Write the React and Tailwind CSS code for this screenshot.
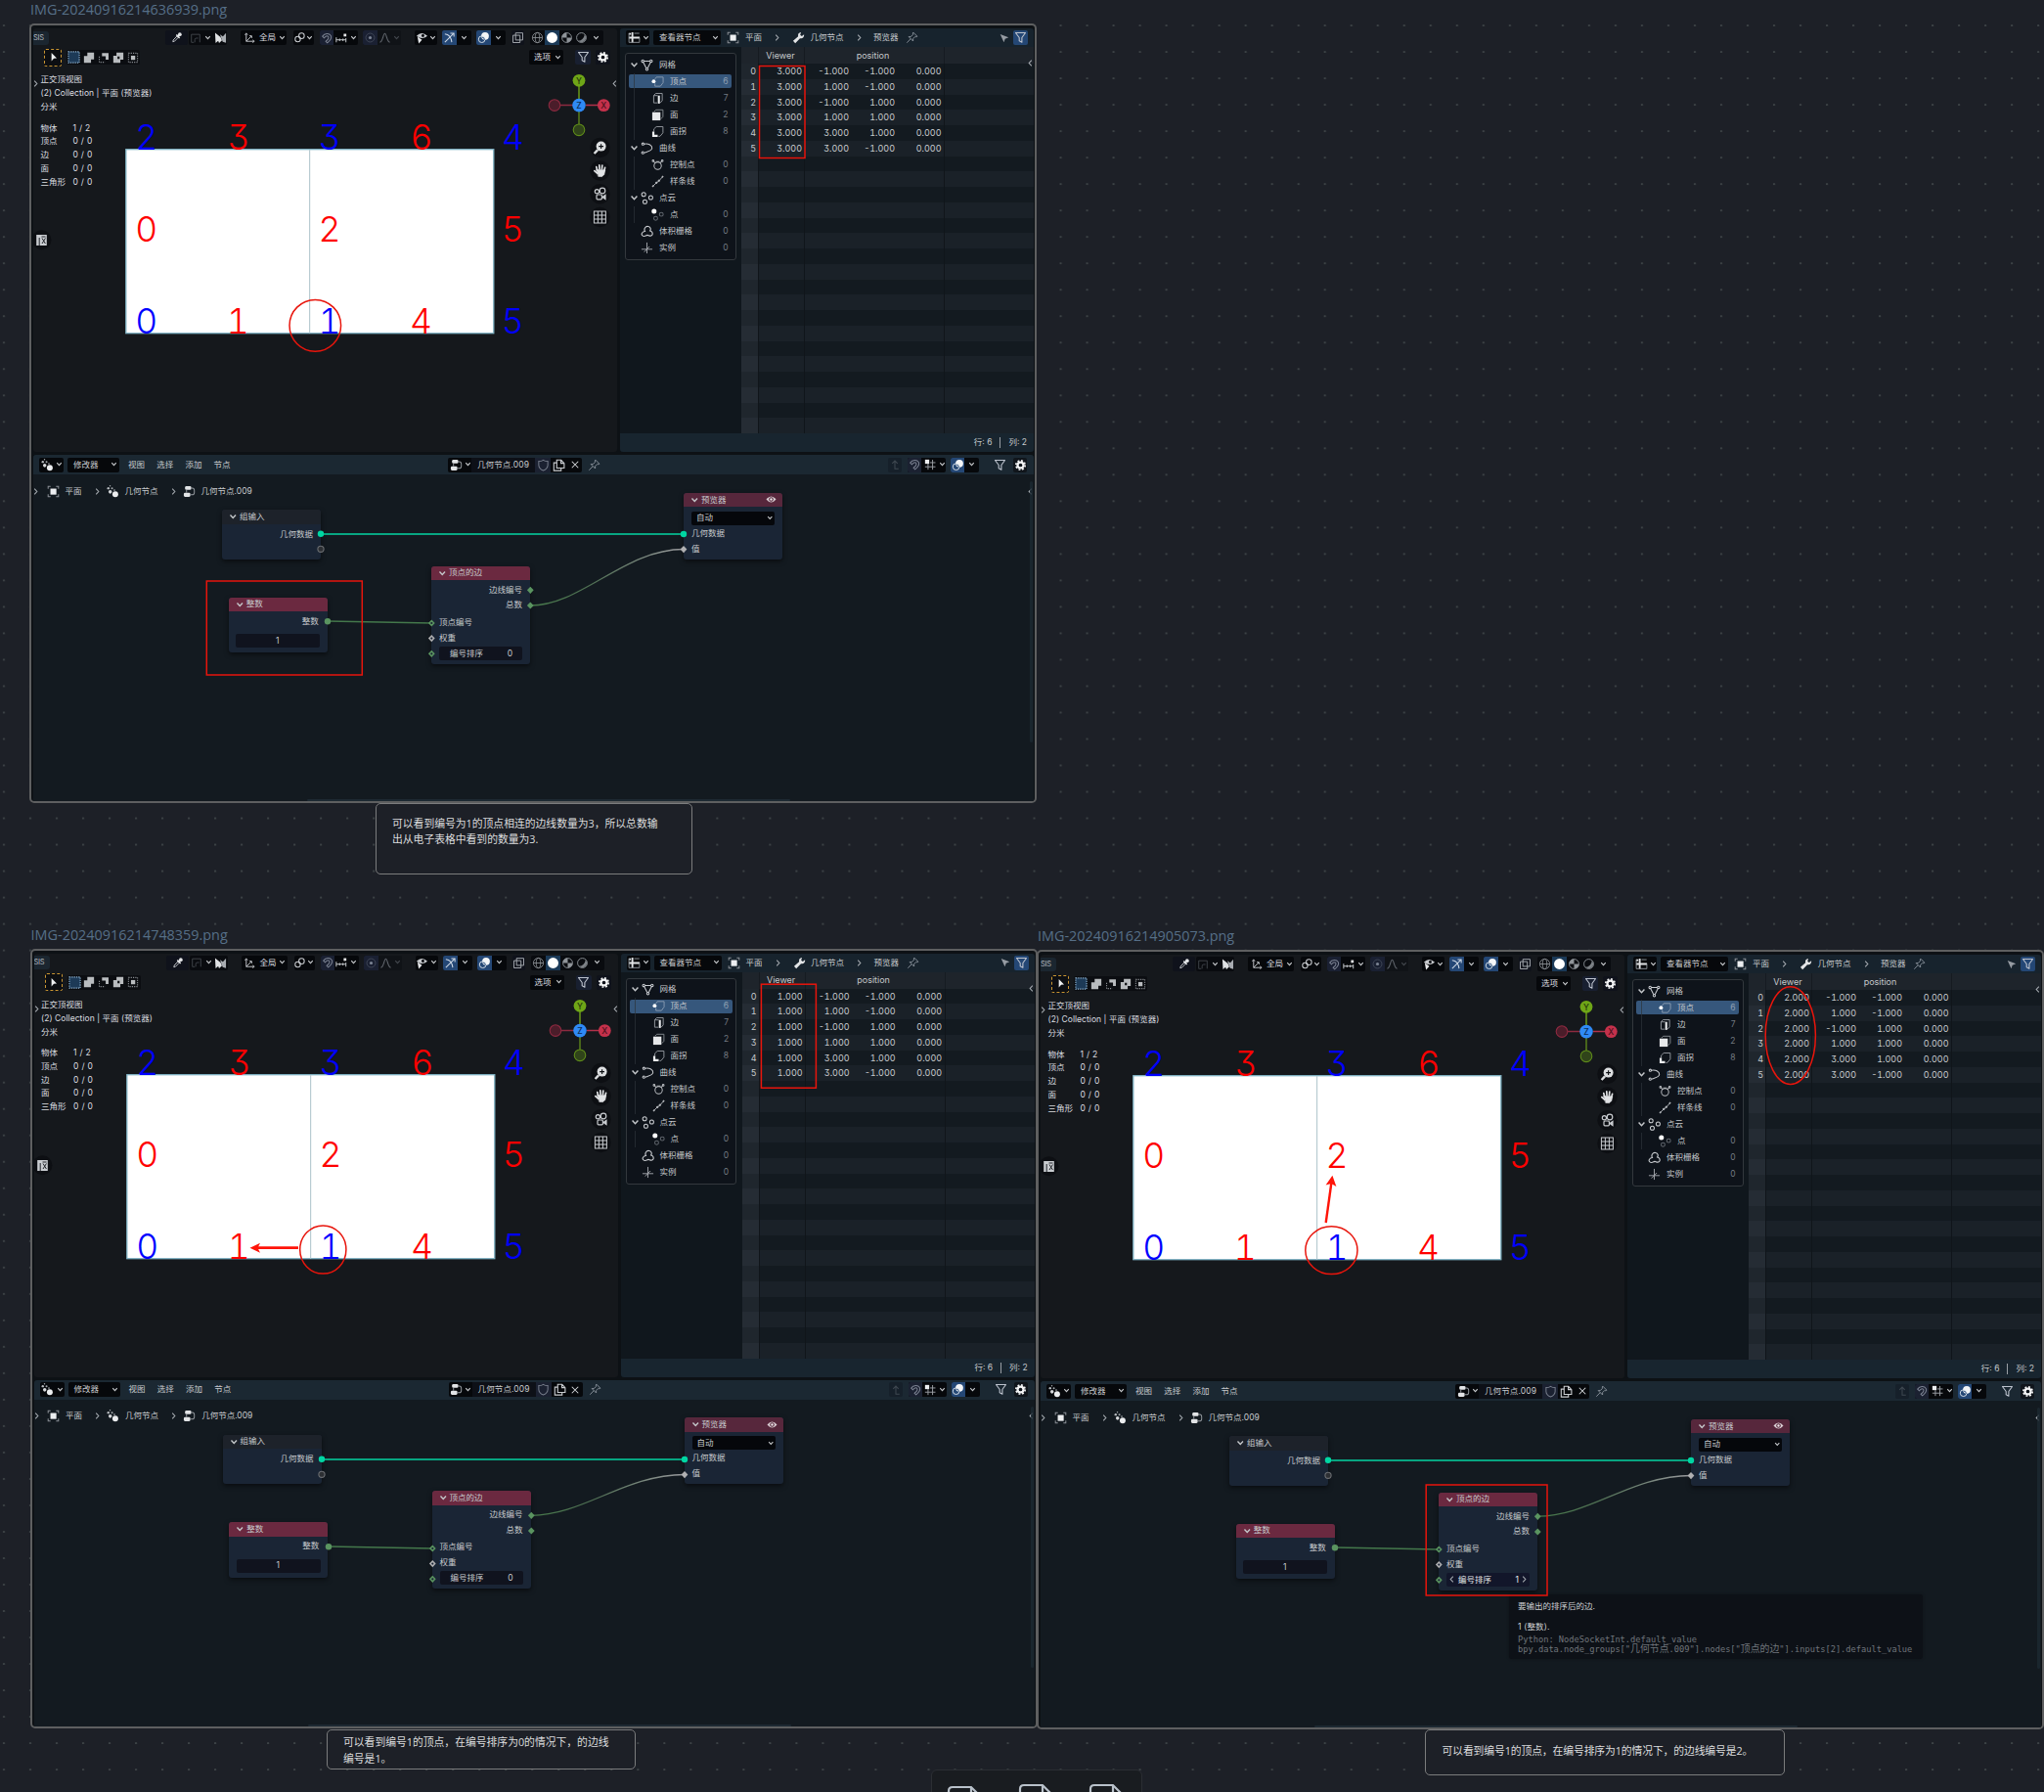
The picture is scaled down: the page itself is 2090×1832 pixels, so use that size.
import React from "react";
import clsx from "clsx";

const CJK = "font-['Inter','Noto_Sans_CJK_SC',sans-serif]";

/* ---------- icons, all drawn on a 14 x 14 grid ---------- */
const G = "#c9ccd0";
const ICONS = {
  eyedropper: (
    <g>
      <path d="M3 11.5 L3.4 9.6 L7.6 5.2 L9 6.6 L4.8 11 Z" fill="none" stroke={G} strokeWidth="1" />
      <path d="M6.8 3.8 L10.4 7.4 M8.2 5.6 L10.6 3.2" stroke="#e4e6e8" strokeWidth="1.7" />
      <circle cx="10.6" cy="3.4" r="2" fill="#e4e6e8" />
    </g>
  ),
  falloff: <path d="M2 2.5 H12 V12 M2 2.5 V12 H5 M6 12 V9 Q6 7 8 7 H10" fill="none" stroke="#4d5258" strokeWidth="0.9" />,
  mirror: (
    <g>
      <path d="M1 1.5 L7 6.5 L8.6 10 L5.4 13 L4.4 10.6 L1.6 13 Z" fill="#e0e2e4" />
      <path d="M13 2 L9.6 5.6 L6.4 3.4 L8 8 L9.4 11.6 L13 12.6 Z" fill="#a9adb2" />
    </g>
  ),
  axes: (
    <g fill="none" stroke={G} strokeWidth="1">
      <path d="M3 3 V11 H11 M3 11 L8.5 5.5" />
      <path d="M1.6 4 L3 2 L4.4 4 M10 9.6 L12 11 L10 12.4 M6.5 5 L9 5 L9 7.5" />
    </g>
  ),
  link: (
    <g fill="none" stroke={G} strokeWidth="1.1">
      <circle cx="4.8" cy="8.6" r="2.9" />
      <circle cx="9" cy="5" r="3" />
      <circle cx="7" cy="7" r="0.9" fill={G} stroke="none" />
    </g>
  ),
  magnet: (
    <path
      d="M2 4.8 C4.6 1 10 0.8 12 4 C13.4 7.4 10.8 10.4 7.8 12.6 L6 10.8 C8.6 8.8 10 6.8 9 5.2 C7.8 3.6 5.6 4.8 4 6.8 Z"
      fill="none"
      stroke="#7b8292"
      strokeWidth="1.2"
    />
  ),
  increments: (
    <g stroke={G} strokeWidth="1.1" fill="none">
      <path d="M1 6 V12 M5 7.5 V10.5 M9 7.5 V10.5 M12.5 7 V12 M1 9 H12.5" />
      <rect x="9.8" y="1.8" width="3.2" height="3.2" fill="#e4e6e8" stroke="none" />
    </g>
  ),
  proportional: (
    <g>
      <circle cx="7" cy="7" r="4.8" fill="none" stroke="#454c5c" strokeWidth="0.9" />
      <circle cx="7" cy="7" r="1.7" fill="#7c8494" />
    </g>
  ),
  bell: <path d="M1.5 12 C5 11.5 5 2.5 7 2.5 C9 2.5 9 11.5 12.5 12" fill="none" stroke="#5f646b" strokeWidth="1.1" />,
  eyecursor: (
    <g>
      <path d="M1 5 Q6.5 -0.6 13 5 Q7 10 1 5 Z" fill={G} />
      <circle cx="8" cy="4.8" r="1.6" fill="#0a0c10" />
      <path d="M2 6 L7 9.5 L3.4 13.4 Z" fill="#e8eaec" />
    </g>
  ),
  gizmo: (
    <g fill="none" stroke="#cfd9e6" strokeWidth="1.1">
      <path d="M2 3 C6 3.5 9 7 9.6 12 M2 12 L11.5 2.5 M8 2.2 H12 V6" />
    </g>
  ),
  overlay: (
    <g>
      <circle cx="8.6" cy="5.2" r="4.2" fill="#f3f5f7" />
      <circle cx="5" cy="8.8" r="3.6" fill="none" stroke="#dfe6ee" strokeWidth="1" />
      <path d="M5 6.5 Q8 6.5 8 9.5" fill="none" stroke="#264a78" strokeWidth="1" />
    </g>
  ),
  xray: (
    <g fill="none" stroke="#a9adb2" strokeWidth="1">
      <path d="M4.5 1.8 H12.4 V9.6 H4.5 Z" />
      <path d="M1.6 4.4 H9.4 V12.4 H1.6 Z" />
    </g>
  ),
  globe: (
    <g fill="none" stroke="#8f9499" strokeWidth="0.9">
      <circle cx="7" cy="7" r="5.5" />
      <ellipse cx="7" cy="7" rx="2.4" ry="5.5" />
      <path d="M1.5 7 H12.5" />
    </g>
  ),
  solid: <circle cx="7" cy="7" r="5.9" fill="#ffffff" />,
  material: (
    <g>
      <circle cx="7" cy="7" r="5.3" fill="none" stroke="#8f9499" strokeWidth="1" />
      <path d="M7 1.7 A5.3 5.3 0 0 0 1.7 7 H7 Z M7 7 H12.3 A5.3 5.3 0 0 1 7 12.3 Z" fill="#8f9499" />
    </g>
  ),
  rendered: (
    <g>
      <circle cx="7" cy="7" r="5.3" fill="none" stroke="#8f9499" strokeWidth="1" />
      <path d="M10.6 3.4 A5.1 5.1 0 0 1 3.4 10.6 Q9.5 9.5 10.6 3.4 Z" fill="#7c8186" />
    </g>
  ),
  funnel: <path d="M1.6 1.6 H12.4 L8.5 7 V12 L5.6 10.6 V7 Z" fill="none" stroke="#bcc2cd" strokeWidth="1.2" strokeLinejoin="round" />,
  gear: (
    <g>
      <circle cx="7" cy="7" r="3.2" fill="none" stroke="#f2f3f4" strokeWidth="2.4" />
      <circle cx="7" cy="7" r="5" fill="none" stroke="#f2f3f4" strokeWidth="1.9" strokeDasharray="2 1.927" />
    </g>
  ),
  cursor: <path d="M5 2.2 L10.8 8 L7.6 8.4 L5 11.2 Z" fill="#eef0f2" />,
  selNew: <rect x="1" y="1" width="12" height="12" fill="#1d3a57" stroke="#8fb4d4" strokeWidth="1.2" strokeDasharray="1.4 1.1" />,
  selAdd: <path d="M5 1 H13 V9 H9.4 V13 H1 V5 H5 Z" fill="#b9bcbf" />,
  selSub: (
    <g>
      <path d="M5 1.4 H12.8 V9.4 H9.4 V5.2 H5 Z" fill="#b9bcbf" />
      <path d="M1.8 5.6 V12.4 H8.6" fill="none" stroke="#888c91" strokeWidth="1.2" strokeDasharray="1.4 1.3" />
    </g>
  ),
  selInv: <path fillRule="evenodd" d="M4.8 1 H13 V9.2 H9.4 V13 H1 V4.8 H4.8 Z M6 5.5 V8.5 H8.5 V5.5 Z" fill="#b9bcbf" />,
  selInt: (
    <g>
      <rect x="4.6" y="4.6" width="5" height="5" fill="#b9bcbf" />
      <rect x="1.6" y="1.6" width="10.8" height="10.8" fill="none" stroke="#888c91" strokeWidth="1.2" strokeDasharray="1.4 1.3" />
    </g>
  ),
  sheet: (
    <g stroke="#e2e4e6" fill="none">
      <path d="M1 2.8 H3.4 M1 7 H13 M5 1 V12.5" strokeWidth="2" />
      <path d="M1.2 2 V12.2 H12.8 V7 M7 2.2 H12.6" strokeWidth="1" stroke="#8f9499" />
    </g>
  ),
  object: (
    <g>
      <rect x="3.8" y="3.8" width="6.6" height="6.6" fill="#eceef0" />
      <path d="M1.3 4 V1.3 H4 M10 1.3 H12.7 V4 M12.7 10 V12.7 H10 M4 12.7 H1.3 V10" fill="none" stroke="#8b9096" strokeWidth="1.1" />
    </g>
  ),
  wrench: <path d="M13 3.4 L10.6 5.4 L8.8 4 L9.8 1 C7.2 1 6 3.4 6.6 5.6 L1 10.6 L3.4 13.2 L8.6 7.8 C11.2 8.4 13.6 6 13 3.4 Z" fill="#e2e4e6" />,
  pin: (
    <path
      d="M8.4 1.2 L12.8 5.6 L11.6 6.2 L10.6 5.8 L8.2 8.2 L8.2 10.8 L3.4 6 L6 5.8 L8.2 3.4 L7.8 2.2 Z M5.6 8.2 L1.4 12.6"
      fill="none"
      stroke="#8a939d"
      strokeWidth="1"
    />
  ),
  arrow: <path d="M2 2.2 L12 6 L7.8 7.8 L6.4 12 Z" fill="#969ca3" />,
  mesh: (
    <g stroke={G} fill="none" strokeWidth="1.1">
      <path d="M3.5 2.6 H10.5 M3 4 L6.3 10.6 M11 4 L7.7 10.6" />
      <circle cx="2.4" cy="2.6" r="1.3" />
      <circle cx="11.6" cy="2.6" r="1.3" />
      <circle cx="7" cy="11.6" r="1.3" />
    </g>
  ),
  vert: (
    <g>
      <path d="M4 4.2 L5.6 2 H13 V8 L10 12 H4 V9" fill="none" stroke="#8a9db2" strokeWidth="1" />
      <circle cx="2.6" cy="6.6" r="2.1" fill="#fff" />
    </g>
  ),
  edge: (
    <g>
      <path d="M2.6 4 L4.8 1.6 H12 V9.6 L9.8 12 M2.6 4 V12 H6.5 M2.6 4 H7" fill="none" stroke="#969ba1" strokeWidth="1" />
      <rect x="7.2" y="4" width="2.2" height="8.8" fill="#eceef0" />
    </g>
  ),
  face: (
    <g>
      <path d="M3 3.4 L5 1.4 H12.8 V9 L10.6 11.4" fill="none" stroke="#868b91" strokeWidth="1" />
      <rect x="1" y="4" width="9" height="9" fill="#e6e8ea" />
    </g>
  ),
  corner: (
    <g>
      <path d="M2.8 7 V4.2 L5.6 1.6 H12.8 V8.4 L9.6 12.2 H8" fill="none" stroke="#969ba1" strokeWidth="1" />
      <path d="M1 7 H3.4 V10.6 H7 V13 H1 Z" fill="#eceef0" />
    </g>
  ),
  curve: (
    <g fill="none" stroke={G} strokeWidth="1.1">
      <path d="M4 2.4 C9 1.6 12.8 4 12.6 7 C12.4 9.8 8.4 10.6 4 12" />
      <circle cx="2.6" cy="2.4" r="1.2" />
      <circle cx="2.4" cy="12" r="1.2" />
    </g>
  ),
  control: (
    <g fill="none" stroke="#b9bcc0" strokeWidth="1.1">
      <circle cx="7" cy="8" r="4" />
      <path d="M2.6 3.4 L4.6 5.2 M11.4 3.4 L9.4 5.2 M5 3.4 H9" />
      <circle cx="2" cy="2.6" r="0.9" />
      <circle cx="12" cy="2.6" r="0.9" />
    </g>
  ),
  spline: (
    <g fill="#c9ccd0" stroke="#b9bcc0" strokeWidth="1">
      <path d="M1.6 12.4 L5.4 8.6 L8 6.8 L12.6 1.6" fill="none" />
      <circle cx="1.8" cy="12.2" r="0.6" />
      <circle cx="5.6" cy="8.4" r="0.8" />
      <circle cx="8.4" cy="6.2" r="0.8" />
      <circle cx="12.4" cy="1.8" r="0.6" />
    </g>
  ),
  cloud: (
    <g fill="none" stroke={G} strokeWidth="1.1">
      <circle cx="3.4" cy="3" r="2.2" />
      <circle cx="11.2" cy="6.4" r="2.2" />
      <circle cx="4.8" cy="11" r="2.2" />
    </g>
  ),
  point: (
    <g fill="none" stroke="#5f656c" strokeWidth="1.1">
      <circle cx="3" cy="3.2" r="2.7" fill="#fff" stroke="none" />
      <circle cx="11" cy="6.6" r="2.1" />
      <circle cx="4.8" cy="11" r="2.1" />
    </g>
  ),
  volume: (
    <path
      d="M4.8 7 C3.2 4 5.6 1 8.4 1.6 C11.4 2.2 11.4 5 10.4 6.4 C14 7.2 14 12 10.6 12 C9 12 8.6 11 7.4 11.2 C6 11.6 5 12.8 2.8 12.2 C0 11 1.2 7.2 4.8 7 Z"
      fill="none"
      stroke={G}
      strokeWidth="1.2"
    />
  ),
  instance: <path d="M7 1 V13 M1 8.4 H13 M4 11.4 L9.8 5.4" fill="none" stroke="#a4a8ad" strokeWidth="1" />,
  geonodes: (
    <g>
      <circle cx="9.6" cy="10" r="3.2" fill="#eceef0" />
      <circle cx="4" cy="7.4" r="1.9" fill="#d6d8db" />
      <circle cx="1.9" cy="3.4" r="1.3" fill="#b6babe" />
      <circle cx="6" cy="3.6" r="1.1" fill="#a6aaae" />
      <circle cx="3.8" cy="0.9" r="0.8" fill="#a6aaae" />
      <circle cx="8.6" cy="5.4" r="0.9" fill="#a6aaae" />
    </g>
  ),
  tree: (
    <g>
      <rect x="2.4" y="1" width="6.8" height="4.2" rx="1.4" fill="#e2e4e6" />
      <rect x="1" y="8.4" width="7.2" height="4.4" rx="1.4" fill="#e2e4e6" />
      <path d="M9 3.2 H10.4 Q12.6 3.2 12.6 6 V8 Q12.6 10.6 10 10.6 H8 M4 5.4 V8.4" fill="none" stroke="#8f9499" strokeWidth="1.1" />
    </g>
  ),
  shield: <path d="M7 1.4 Q9 2.8 12 2.8 V7 Q11.8 11 7 13 Q2.2 11 2 7 V2.8 Q5 2.8 7 1.4 Z" fill="none" stroke="#757c8a" strokeWidth="1.1" />,
  copy: (
    <g fill="none" stroke={G} strokeWidth="1.2">
      <path d="M4.6 1.4 H9.4 L12.8 5 V10.2 H4.6 Z M9.2 1.8 V5 H12.4" />
      <path d="M4.4 4.4 H1.4 V13 H9.4 V10.4" />
    </g>
  ),
  close: <path d="M3.2 3.2 L10.8 10.8 M10.8 3.2 L3.2 10.8" fill="none" stroke="#d5d7da" strokeWidth="1.2" />,
  up: <path d="M11.4 12 H7 V2.4 M3.8 5.6 L7 2.4 L10.2 5.6" fill="none" stroke="#3f4851" strokeWidth="1.2" />,
  grid: (
    <g fill="none" stroke="#9ea2a7" strokeWidth="1.1">
      <path d="M4.6 6 V13 M10 1.2 V13 M1 9.6 H13.4 M7 4.6 H13.4" />
      <rect x="1" y="1" width="5" height="5" fill="#eceef0" stroke="none" />
    </g>
  ),
  eye: (
    <g>
      <path d="M0.6 7 Q7 -0.8 13.4 7 Q7 14.8 0.6 7 Z" fill="#d9ced3" />
      <circle cx="7" cy="7" r="2.9" fill="#57273c" />
      <circle cx="7" cy="7" r="1.5" fill="#efe9ec" />
    </g>
  ),
};

function Ico({ n, className = "size-[13px]" }) {
  return (
    <svg viewBox="0 0 14 14" className={clsx("shrink-0", className)}>
      {ICONS[n]}
    </svg>
  );
}

function Slot({ w = "w-[15px]", className, children }) {
  return <div className={clsx("flex h-full shrink-0 items-center justify-center", w, className)}>{children}</div>;
}

function Down({ color = "#c4c7ca", className = "w-[7px]" }) {
  return (
    <svg viewBox="0 0 8 6" className={clsx("shrink-0", className)}>
      <path d="M1.4 1.4 L4 4.2 L6.6 1.4" fill="none" stroke={color} strokeWidth="1.3" />
    </svg>
  );
}

function Side({ left, className }) {
  return (
    <svg viewBox="0 0 6 10" className={clsx("h-[9px] w-[5px] shrink-0", className)}>
      <path d={left ? "M4.6 1.5 L1.4 5 L4.6 8.5" : "M1.4 1.5 L4.6 5 L1.4 8.5"} fill="none" stroke="#a4a9af" strokeWidth="1.3" />
    </svg>
  );
}

function Group({ className, children }) {
  return <div className={clsx("flex h-[15px] shrink-0 items-center overflow-hidden rounded-[2px]", className)}>{children}</div>;
}

/* ---------- 3D viewport ---------- */
const RED = "#ff0000";
const BLUE = "#0000ff";
const DIGITS = [
  ["2", 149.7, 152.7, BLUE],
  ["3", 244, 152.7, RED],
  ["3", 337, 152.7, BLUE],
  ["6", 431, 152.7, RED],
  ["4", 524.5, 152.7, BLUE],
  ["0", 149.7, 246.5, RED],
  ["2", 337, 246.5, RED],
  ["5", 524.2, 246.5, RED],
  ["0", 149.7, 340.5, BLUE],
  ["1", 243.3, 340.5, RED],
  ["1", 337, 340.5, BLUE],
  ["4", 430.5, 340.5, RED],
  ["5", 524.2, 340.5, BLUE],
];

function Scene() {
  return (
    <svg viewBox="34 29 597 433" className="absolute inset-0 h-[433px] w-[597px]">
      <rect x="128.8" y="152.7" width="376" height="188" fill="#ffffff" stroke="#7fb2c4" strokeWidth="1.3" />
      <path d="M316.6 153 V340.5" stroke="#b9ccd2" strokeWidth="1.2" />
      {DIGITS.map(([d, x, y, c], i) => (
        <text
          key={i}
          x={x}
          y={y}
          fill={c}
          textAnchor="middle"
          className="font-['Inter',sans-serif] text-[35.5px] font-[350] [font-feature-settings:'tnum','cv09']"
        >
          {d}
        </text>
      ))}
      <path d="M592 88 V102" stroke="#6a9a18" strokeWidth="1.5" />
      <path d="M592 114 V127" stroke="#587f1a" strokeWidth="1.5" />
      <path d="M599 107.5 H611" stroke="#b3304a" strokeWidth="1.5" />
      <path d="M573 107.5 H586" stroke="#8d2a40" strokeWidth="1.5" />
      <circle cx="592" cy="82.3" r="6.4" fill="#6fa617" />
      <circle cx="617.3" cy="107.6" r="6.4" fill="#c4314b" />
      <circle cx="592" cy="107.6" r="6.8" fill="#2f8af5" />
      <circle cx="567" cy="107.6" r="5.8" fill="#4b1d2a" stroke="#8d2a40" strokeWidth="1.1" />
      <circle cx="592" cy="132.8" r="5.8" fill="#30441a" stroke="#5f8c1a" strokeWidth="1.1" />
      <g textAnchor="middle" className="font-['Inter',sans-serif] text-[8.5px] font-medium">
        <text x="592" y="85.5" fill="#26390b">Y</text>
        <text x="617.3" y="110.7" fill="#4a0f1b">X</text>
        <text x="592" y="110.7" fill="#0d2d55">Z</text>
      </g>
      {[151, 174.5, 198.3, 222].map((y) => (
        <circle key={y} cx="613.5" cy={y} r="10.2" fill="#0d0f13" />
      ))}
      <circle cx="42.5" cy="245.3" r="10" fill="#0d0f13" />
      <g>
        <circle cx="614.6" cy="149.6" r="5" fill="#dcdee0" />
        <path d="M611 153.4 L607.6 157" stroke="#dcdee0" strokeWidth="2.4" />
        <path d="M612.2 149.6 H617 M614.6 147.2 V152" stroke="#0d0f13" strokeWidth="1.1" />
      </g>
      <g stroke="#e0e2e4" strokeLinecap="round" fill="none">
        <path d="M610.6 174 L609.8 170.6 M613 173 L612.8 168.8 M615.4 173 L615.8 169.2 M617.8 174.6 L618.6 171.4 M610.6 177 L607.8 174.6" strokeWidth="1.7" />
        <path d="M609.8 173.5 L618.8 173.8 L617.8 178.4 L615.6 180.6 L612 180.4 Z" fill="#e0e2e4" strokeWidth="0.6" />
      </g>
      <g fill="none" stroke="#c9ccd0" strokeWidth="1.2">
        <circle cx="610.4" cy="195.8" r="2.1" />
        <circle cx="616" cy="195" r="2.8" />
        <rect x="610" y="199" width="5.4" height="4.8" rx="1" />
        <path d="M616 201.4 L619 199.4 V203.6 Z" fill="#c9ccd0" />
      </g>
      <g fill="none" stroke="#c9ccd0" strokeWidth="1">
        <rect x="607.4" y="216" width="12" height="12" />
        <path d="M611.4 216 V228 M615.4 216 V228 M607.4 220 H619.4 M607.4 224 H619.4" />
      </g>
      <rect x="37.2" y="240" width="10.6" height="11" fill="#c9ccd0" />
      <path d="M40.2 243 V251 M42.5 242 H46.5 M43 243.5 L46.4 249 M46.4 243.5 L43 249" stroke="#22252a" strokeWidth="1" />
    </svg>
  );
}

const STATS = [
  ["物体", "1 / 2"],
  ["顶点", "0 / 0"],
  ["边", "0 / 0"],
  ["面", "0 / 0"],
  ["三角形", "0 / 0"],
];

function Viewport() {
  return (
    <div className="relative h-[433px] w-[597px] shrink-0 overflow-hidden rounded-[3px] bg-[#15181c] text-[8.5px] text-[#dcdee0]">
      <Scene />
      <div className="relative flex h-[19px] items-center">
        <div className="flex h-[14px] w-[16px] shrink-0 items-center rounded-r-[3px] bg-[#1b2630] text-[7.5px] tracking-[-0.3px] text-[#b5bac0]">
          <span>SIS</span>
        </div>
        <Group className="ml-[119px] w-[23px] justify-center bg-[#0f121b]"><Ico n="eyedropper" /></Group>
        <Group className="ml-[1px] bg-[#090b0f]">
          <Slot w="w-[14px]"><Ico n="falloff" className="size-[12px]" /></Slot>
          <Slot w="w-[11px]"><Down /></Slot>
          <Slot w="w-[14px]"><Ico n="mirror" /></Slot>
        </Group>
        <Group className="ml-[14px] bg-[#06080b]">
          <Slot w="w-[18px]"><Ico n="axes" /></Slot>
          <Slot w="w-[19px]">全局</Slot>
          <Slot w="w-[10px]"><Down /></Slot>
        </Group>
        <Group className="ml-[7px] bg-[#06080b]">
          <Slot w="w-[12px]"><Ico n="link" /></Slot>
          <Slot w="w-[9px]"><Down /></Slot>
        </Group>
        <Group className="ml-[6px] bg-[#06080b]">
          <Slot w="w-[14px]" className="bg-[#1a2032]"><Ico n="magnet" className="size-[12px]" /></Slot>
          <Slot><Ico n="increments" className="size-[12px]" /></Slot>
          <Slot w="w-[10px]"><Down /></Slot>
        </Group>
        <Group className="ml-[5px] bg-[#101317]">
          <Slot className="bg-[#1a2032]"><Ico n="proportional" /></Slot>
          <Slot><Ico n="bell" /></Slot>
          <Slot w="w-[9px]"><Down color="#43474d" /></Slot>
        </Group>
        <Group className="ml-[14px] bg-[#06080b]">
          <Slot w="w-[14px]"><Ico n="eyecursor" /></Slot>
          <Slot w="w-[9px]"><Down /></Slot>
        </Group>
        <Group className="ml-[5px] bg-[#06080b]">
          <Slot className="bg-[#244775]"><Ico n="gizmo" /></Slot>
          <Slot><Down /></Slot>
        </Group>
        <Group className="ml-[5px] bg-[#06080b]">
          <Slot className="bg-[#244775]"><Ico n="overlay" /></Slot>
          <Slot><Down /></Slot>
        </Group>
        <Group className="ml-[6px] w-[13px] justify-center bg-[#0f121b]"><Ico n="xray" /></Group>
        <Group className="ml-[6px] bg-[#090b0f]">
          <Slot><Ico n="globe" /></Slot>
          <Slot className="bg-[#1b3a58]"><Ico n="solid" /></Slot>
          <Slot><Ico n="material" /></Slot>
          <Slot><Ico n="rendered" /></Slot>
          <Slot><Down /></Slot>
        </Group>
      </div>
      <div className="relative flex h-[21px] items-center">
        <div className="ml-[11px] flex size-[18px] shrink-0 items-center justify-center rounded-[2px] border border-dashed border-[#c99532] bg-[#0c0e12]">
          <Ico n="cursor" />
        </div>
        <Group className="ml-[5px] bg-[#0b0d11]">
          <Slot><Ico n="selNew" /></Slot>
          <Slot><Ico n="selAdd" className="size-[12px]" /></Slot>
          <Slot><Ico n="selSub" className="size-[12px]" /></Slot>
          <Slot><Ico n="selInv" className="size-[12px]" /></Slot>
          <Slot><Ico n="selInt" className="size-[12px]" /></Slot>
        </Group>
        <Group className="ml-[398px] w-[35px] justify-between bg-[#06080b] pl-[5px] pr-[2px]">
          <span>选项</span>
          <Down />
        </Group>
        <Group className="ml-[12px] w-[16px] justify-center bg-[#181f30]"><Ico n="funnel" /></Group>
        <Group className="ml-[5px] w-[15px] justify-center bg-[#0f121b]"><Ico n="gear" /></Group>
      </div>
      <div className="relative flex justify-between pt-[5px]">
        <Side className="mt-[7px] ml-[0px]" />
        <div className="ml-[2.5px] flex-1">
          <div className="h-[14px] leading-[14px]">正交顶视图</div>
          <div className="h-[14px] leading-[14px] tracking-[0.05px]">(2) Collection | 平面 (预览器)</div>
          <div className="h-[14px] leading-[14px]">分米</div>
          <div className="mt-[8.6px] grid auto-rows-[13.75px] grid-cols-[33px_auto] leading-[13.75px]">
            {STATS.map(([k, v]) => (
              <React.Fragment key={k}>
                <span>{k}</span>
                <span className="tracking-[0.3px]">{v}</span>
              </React.Fragment>
            ))}
          </div>
        </div>
        <Side left className="mt-[7px]" />
      </div>
    </div>
  );
}

/* ---------- spreadsheet ---------- */
const TREE = [
  { l: 0, icon: "mesh", t: "网格" },
  { l: 1, icon: "vert", t: "顶点", c: 6, on: true },
  { l: 1, icon: "edge", t: "边", c: 7 },
  { l: 1, icon: "face", t: "面", c: 2 },
  { l: 1, icon: "corner", t: "面拐", c: 8 },
  { l: 0, icon: "curve", t: "曲线" },
  { l: 1, icon: "control", t: "控制点", c: 0 },
  { l: 1, icon: "spline", t: "样条线", c: 0 },
  { l: 0, icon: "cloud", t: "点云" },
  { l: 1, icon: "point", t: "点", c: 0 },
  { l: 2, icon: "volume", t: "体积栅格", c: 0 },
  { l: 2, icon: "instance", t: "实例", c: 0 },
];

const POS = [
  ["-1.000", "-1.000", "0.000"],
  ["1.000", "-1.000", "0.000"],
  ["-1.000", "1.000", "0.000"],
  ["1.000", "1.000", "0.000"],
  ["3.000", "1.000", "0.000"],
  ["3.000", "-1.000", "0.000"],
];

function Spreadsheet({ value }) {
  return (
    <div className="flex h-[433px] w-[423px] shrink-0 flex-col overflow-hidden rounded-[3px] bg-[#10171d] text-[8.5px] text-[#c6c9cc]">
      <div className="flex h-[19px] shrink-0 items-center bg-[#17232d]">
        <Group className="ml-[6px] bg-[#06080b]">
          <Slot w="w-[16px]"><Ico n="sheet" /></Slot>
          <Slot w="w-[8px]"><Down /></Slot>
        </Group>
        <Group className="ml-[4px] w-[69px] justify-between bg-[#06080b] pl-[6px] pr-[2px]">
          <span>查看器节点</span>
          <Down />
        </Group>
        <Ico n="object" className="ml-[6px] size-[13px]" />
        <span className="ml-[6px] w-[26px]">平面</span>
        <Side className="ml-[4px]" />
        <Ico n="wrench" className="ml-[13px] size-[13px]" />
        <span className="ml-[5.5px] w-[42px]">几何节点</span>
        <Side className="ml-[5px]" />
        <span className="ml-[12.5px] w-[28px]">预览器</span>
        <Ico n="pin" className="ml-[5px] size-[13px]" />
        <Ico n="arrow" className="ml-auto size-[12px]" />
        <Group className="mr-[6px] ml-[3px] w-[15px] justify-center bg-[#244775]"><Ico n="funnel" /></Group>
      </div>
      <div className="flex h-[395px] shrink-0">
        <div className="w-[124px] shrink-0 pt-[6px] pl-[5px]">
          <div className="h-[211.5px] w-[113.5px] rounded-[3px] border border-[#33383d] bg-[#0e131a] px-[3px] pt-[2.5px]">
            {TREE.map((r) => (
              <div key={r.t} className="flex h-[17.02px] items-center">
                <div className={clsx("flex h-[14px] w-[105px] items-center rounded-[2px]", r.on && "bg-[#36577c]")}>
                  <div className="flex w-[11px] shrink-0 justify-center">
                    {r.l === 0 && <Down className="w-[9px]" />}
                    {r.l === 1 && <div className="h-[17px] w-px bg-[#2c333b]/70" />}
                  </div>
                  <Ico n={r.icon} className={r.l === 1 ? "ml-[12px] size-[13px]" : "ml-[1px] size-[13px]"} />
                  <span className="ml-[6px]">{r.t}</span>
                  {r.c !== undefined && <span className={clsx("mr-[3.5px] ml-auto", r.on ? "text-[#90a0b2]" : "text-[#747a81]")}>{r.c}</span>}
                </div>
              </div>
            ))}
          </div>
        </div>
        <div className="relative flex w-[299px] flex-col text-[9px] [font-feature-settings:'tnum','cv09']">
          <div className="grid h-[17px] shrink-0 grid-cols-[17px_48px_142px_92px] items-center bg-[#1e242b] text-center">
            <span />
            <span className="flex h-full items-center justify-center border-x border-[#161b21] pr-[2px]">Viewer</span>
            <span className="pr-[3px]">position</span>
            <span className="flex h-full items-end justify-end border-l border-[#161b21]" />
          </div>
          {Array.from({ length: 24 }, (_, i) => (
            <div
              key={i}
              className={clsx(
                "grid h-[15.75px] shrink-0 grid-cols-[17px_48px_47.5px_47px_47.5px_92px] items-center text-right leading-[15.75px]",
                i % 2 ? "bg-[#1a2128]" : "bg-[#131a20]"
              )}
            >
              <span className={clsx("h-full pr-[2px]", i % 2 ? "bg-[#252c34]" : "bg-[#1f262d]")}>{i < 6 ? i : ""}</span>
              <span className="h-full border-x border-[#10151a] pr-[2px]">{i < 6 ? value : ""}</span>
              <span className="pr-[2.5px]">{i < 6 ? POS[i][0] : ""}</span>
              <span className="pr-[2.5px]">{i < 6 ? POS[i][1] : ""}</span>
              <span className="pr-[2.5px]">{i < 6 ? POS[i][2] : ""}</span>
              <span className="h-full border-l border-[#10151a]" />
            </div>
          ))}
          <Side left className="absolute top-[12px] right-[1px]" />
        </div>
      </div>
      <div className="flex h-[19px] items-center justify-end gap-[8px] bg-[#18252f] pr-[7px]">
        <span>行: 6</span>
        <span className="h-[11px] w-px bg-[#9a9fa5]" />
        <span>列: 2</span>
      </div>
    </div>
  );
}

/* ---------- node editor ---------- */
function Node({ className, head, title, eye, children }) {
  return (
    <div className={clsx("absolute w-[101px] rounded-[3px] bg-[#1a2535] shadow-[0_2px_5px_rgba(0,0,0,0.55)]", className)}>
      <div className={clsx("flex h-[14.5px] items-center rounded-t-[3px] pl-[7px]", head)}>
        <Down className="w-[8.5px]" />
        <span className="ml-[2.5px]">{title}</span>
        {eye && <Ico n="eye" className="mr-[6px] ml-auto size-[11px]" />}
      </div>
      {children}
    </div>
  );
}

function Links({ from }) {
  return (
    <svg viewBox="34 465 1023 354" className="absolute inset-0 h-[354px] w-[1023px]">
      <defs>
        <linearGradient id={"lk" + from} x1="542" x2="699" y1="0" y2="0" gradientUnits="userSpaceOnUse">
          <stop offset="0" stopColor="#46794a" />
          <stop offset="0.4" stopColor="#4f6f53" />
          <stop offset="1" stopColor="#9a9a9e" />
        </linearGradient>
      </defs>
      <path d="M328 546 H699" stroke="#07a581" strokeWidth="2" />
      <path d="M335 635 L441 637" stroke="#44784b" strokeWidth="1.6" />
      <path d={`M542 ${from} C595 ${from} 638 561.5 699 561.5`} fill="none" stroke={`url(#lk${from})`} strokeWidth="1.3" />
    </svg>
  );
}

function Sockets() {
  const d = (x, y, c, hollow) => (
    <g key={x + "-" + y}>
      <path d={`M${x} ${y - 3.6} L${x + 3.4} ${y} L${x} ${y + 3.6} L${x - 3.4} ${y} Z`} fill={c} />
      {hollow && <circle cx={x} cy={y} r="1.1" fill="#1a2535" />}
    </g>
  );
  return (
    <svg viewBox="34 465 1023 354" className="absolute inset-0 h-[354px] w-[1023px]">
      <circle cx="328" cy="545.8" r="3.2" fill="#00d6a3" />
      <circle cx="328" cy="561.3" r="3.1" fill="#2c2f33" stroke="#6b6e72" strokeWidth="1.1" />
      <circle cx="335" cy="635.3" r="3.2" fill="#5a9460" />
      {d(542.3, 603.3, "#5a9460")}
      {d(542.3, 619, "#5a9460")}
      {d(441.3, 637, "#5a9460", true)}
      {d(441.3, 652.6, "#b0b0b2", true)}
      {d(441.3, 668.3, "#5a9460", true)}
      <circle cx="699" cy="546" r="3.2" fill="#00d6a3" />
      {d(699, 561.6, "#b0b0b2")}
    </svg>
  );
}

function NodeEditor({ from, sort, editing }) {
  return (
    <div className="relative h-[354px] w-[1023px] shrink-0 overflow-hidden rounded-t-[3px] bg-[#131a20] text-[8.5px] text-[#c6c9cc]">
      <div className="flex h-[20px] items-center bg-[#1b2832]">
        <Group className="ml-[6px] bg-[#06080b]">
          <Slot w="w-[16px]"><Ico n="geonodes" /></Slot>
          <Slot w="w-[9px]"><Down /></Slot>
        </Group>
        <Group className="ml-[4px] w-[53px] justify-between bg-[#06080b] pl-[6px] pr-[2px]">
          <span>修改器</span>
          <Down />
        </Group>
        <div className="ml-[9px] flex gap-[12.2px]">
          <span>视图</span>
          <span>选择</span>
          <span>添加</span>
          <span>节点</span>
        </div>
        <Group className="ml-[222.4px] bg-[#06080b]">
          <Slot w="w-[16px]"><Ico n="tree" /></Slot>
          <Slot w="w-[8px]"><Down /></Slot>
          <Slot w="w-[65px]" className="bg-[#0d1017] tracking-[0.1px]">几何节点.009</Slot>
          <Slot w="w-[16px]" className="bg-[#1b2131]"><Ico n="shield" /></Slot>
          <Slot w="w-[17px]"><Ico n="copy" /></Slot>
          <Slot w="w-[15px]"><Ico n="close" className="size-[12px]" /></Slot>
        </Group>
        <Ico n="pin" className="ml-[6px] size-[13px]" />
        <Group className="ml-auto w-[14px] justify-center bg-[#16202a]"><Ico n="up" className="size-[12px]" /></Group>
        <Group className="ml-[6px] bg-[#06080b]">
          <Slot w="w-[14px]" className="bg-[#1b2131]"><Ico n="magnet" className="size-[12px]" /></Slot>
          <Slot w="w-[17px]"><Ico n="grid" className="size-[12px]" /></Slot>
          <Slot w="w-[8px]"><Down /></Slot>
        </Group>
        <Group className="ml-[5px] bg-[#06080b]">
          <Slot w="w-[14px]" className="bg-[#244775]"><Ico n="overlay" /></Slot>
          <Slot><Down /></Slot>
        </Group>
        <Slot w="w-[15px]" className="ml-[14px]"><Ico n="funnel" /></Slot>
        <Group className="mr-[7px] ml-[6px] w-[14px] justify-center bg-[#10151b]"><Ico n="gear" /></Group>
      </div>
      <div className="mt-[9px] flex h-[16px] items-center">
        <Side />
        <Ico n="object" className="ml-[8.5px] size-[13px]" />
        <span className="ml-[6px]">平面</span>
        <Side className="ml-[13px]" />
        <Ico n="geonodes" className="ml-[7px] size-[13px]" />
        <span className="ml-[6px]">几何节点</span>
        <Side className="ml-[13px]" />
        <Ico n="tree" className="ml-[7px] size-[13px]" />
        <span className="ml-[6px]">几何节点.009</span>
        <Side left className="mr-[1px] ml-auto" />
      </div>
      <div className="absolute top-[27px] right-[1px] h-[267px] w-[3px] rounded bg-[#1d2932]/80" />
      <div className="absolute bottom-0 left-[280px] h-[2px] w-[494px] rounded bg-[#1d2932]" />

      <Links from={from} />
      <Node className="top-[56px] left-[193px] h-[50.5px]" head="bg-[#1d222a]" title="组输入">
        <div className="mt-[3px] pr-[8px] text-right leading-[15.5px]">几何数据</div>
      </Node>
      <Node className="top-[145.5px] left-[199.7px] h-[56.5px]" head="bg-[#6b2940]" title="整数">
        <div className="mt-[2.5px] pr-[9px] text-right leading-[15.5px]">整数</div>
        <div className="mx-auto mt-[5px] flex h-[14px] w-[86px] items-center justify-center rounded-[2px] bg-[#10131e] pr-[1px]">1</div>
      </Node>
      <Node className="top-[113.5px] left-[407px] h-[100px]" head="bg-[#6b2940]" title="顶点的边">
        <div className="mt-[2.5px] pr-[8px] text-right leading-[15.7px]">
          <div>边线编号</div>
          <div>总数</div>
        </div>
        <div className="mt-[2px] pl-[8px] leading-[15.7px]">
          <div>顶点编号</div>
          <div>权重</div>
        </div>
        <div className={clsx("mx-[8px] mt-[0.6px] flex h-[14px] items-center rounded-[2px]", editing ? "bg-[#12162a] px-[3px] text-[#e4e6e8]" : "bg-[#10131e] pr-[10px] pl-[11px]")}>
          {editing && <Side left className="mr-[4px] h-[7px] w-[4px]" />}
          <span>编号排序</span>
          <span className="ml-auto">{sort}</span>
          {editing && <Side className="ml-[3px] h-[7px] w-[4px]" />}
        </div>
      </Node>
      <Node className="top-[38.7px] left-[665px] h-[68px]" head="bg-[#57273c]" title="预览器" eye>
        <div className="mx-[8px] mt-[4.5px] flex h-[14px] items-center justify-between rounded-[2px] bg-[#05070b] pr-[1.5px] pl-[5px]">
          <span>自动</span>
          <Down className="w-[6.5px]" />
        </div>
        <div className="mt-[1.3px] pl-[8px] leading-[15.6px]">
          <div>几何数据</div>
          <div>值</div>
        </div>
      </Node>
      <Sockets />
    </div>
  );
}

function Frame({ className, labelClass, name, value, from, sort, editing, children, tip }) {
  return (
    <div className={clsx("absolute h-[797px] w-[1030px]", className)}>
      <div className={clsx("absolute left-[1px] font-['Open_Sans',sans-serif] text-[14.4px] leading-[20px] whitespace-nowrap text-[#566f87]", labelClass)}>
        {name}
      </div>
      <div className="flex h-full w-full flex-col overflow-hidden rounded-[5px] border-2 border-[#5e5f60] bg-[#0d1115] pt-[3px] pl-[2px]">
        <div className="flex gap-[3px]">
          <Viewport />
          <Spreadsheet value={value} />
        </div>
        <div className="mt-[3px]">
          <NodeEditor from={from} sort={sort} editing={editing} />
        </div>
      </div>
      {tip}
      <svg viewBox="30 24 1030 797" className="absolute inset-0 h-[797px] w-[1030px]" fill="none" stroke="#e8150c" strokeWidth="1.5">
        {children}
      </svg>
    </div>
  );
}

function Note({ className, children }) {
  return (
    <div
      className={clsx(
        "absolute rounded-[5px] border border-[#7b7c7d] bg-[#1d2027] font-['Open_Sans','Noto_Sans_CJK_SC',sans-serif] text-[10.8px] text-[#dcddde]",
        className
      )}
    >
      {children}
    </div>
  );
}

function FileIcon({ className }) {
  return (
    <svg viewBox="0 0 36 40" className={clsx("h-[40px] w-[36px] shrink-0", className)} fill="none" stroke="#b9c1ca" strokeWidth="2.2">
      <path d="M2 38 V6 Q2 2 6 2 H25 L34 11 V38" />
      <path d="M25 2 V12 H34" />
    </svg>
  );
}

export default function App() {
  return (
    <div
      className={clsx(
        "relative h-[1832px] w-[2090px] overflow-hidden bg-[#1d2027] bg-[radial-gradient(circle_at_4px_26.2px,#3c4245_0.8px,transparent_1.5px)] bg-[size:27.02px_27.02px]",
        CJK
      )}
    >
      <Frame className="top-[24px] left-[30px]" labelClass="-top-[24px]" name="IMG-20240916214636939.png" value="3.000" from={619} sort="0">
        <ellipse cx="322.3" cy="332.8" rx="26.3" ry="26.4" />
        <rect x="776.5" y="67.5" width="46.5" height="94" />
        <rect x="211.3" y="594" width="159" height="96" />
      </Frame>

      <Frame className="top-[969.5px] left-[30.6px]" labelClass="-top-[23.5px]" name="IMG-20240916214748359.png" value="1.000" from={603.3} sort="0">
        <ellipse cx="329.3" cy="331.5" rx="23.6" ry="24.6" />
        <path d="M304 329.7 H262" stroke="#ff1408" strokeWidth="2.8" />
        <path d="M254.5 329.7 L265 324.7 L262.5 329.7 L265 334.7 Z" fill="#ff1408" stroke="none" />
        <rect x="777.4" y="60.2" width="56" height="106" />
      </Frame>

      <Frame
        className="top-[971px] left-[1060px]"
        labelClass="-top-[24px]"
        name="IMG-20240916214905073.png"
        value="2.000"
        from={603.2}
        sort="1"
        editing
        tip={
          <div className="absolute top-[658.5px] left-[483px] h-[66px] w-[423px] rounded-[3px] bg-[#0d1117] pl-[9px] text-[8.5px] text-[#cdd0d3] shadow-[0_0_3px_rgba(0,0,0,0.3)]">
            <div className="mt-[6px] h-[12px] leading-[12px]">要输出的排序后的边.</div>
            <div className="mt-[9px] h-[12px] leading-[12px] tracking-[0.15px]">1 (整数).</div>
            <div className="mt-[2px] font-['DejaVu_Sans_Mono','Noto_Sans_CJK_SC',monospace] text-[8.7px] leading-[10.5px] whitespace-nowrap text-[#70757b]">
              <div className="h-[10.5px]">Python: NodeSocketInt.default_value</div>
              <div className="flex h-[10.5px] items-baseline">
                <span>bpy.data.node_groups["</span>
                <span className="text-[9.9px]">几何节点</span>
                <span>.009"].nodes["</span>
                <span className="text-[9.9px]">顶点的边</span>
                <span>"].inputs[2].default_value</span>
              </div>
            </div>
          </div>
        }
      >
        <ellipse cx="331.4" cy="331.2" rx="26.6" ry="24.4" />
        <path d="M325.7 303 L331.4 262" stroke="#ff1408" strokeWidth="2.4" />
        <path d="M332.4 254.7 L336.4 266 L331.2 263 L325.6 264.4 Z" fill="#ff1408" stroke="none" />
        <ellipse cx="800.8" cy="111.6" rx="25.6" ry="49.8" />
        <rect x="428.2" y="571" width="123.8" height="113" />
      </Frame>

      <Note className="top-[821px] left-[384px] h-[73px] w-[323.5px] pt-[12px] pl-[16px] leading-[16.3px]">
        可以看到编号为1的顶点相连的边线数量为3，所以总数输
        <br />
        出从电子表格中看到的数量为3.
      </Note>
      <Note className="top-[1768px] left-[334px] h-[41px] w-[316px] pt-[3px] pl-[16px] leading-[17px]">
        可以看到编号1的顶点，在编号排序为0的情况下，的边线
        <br />
        编号是1。
      </Note>
      <Note className="top-[1768px] left-[1457px] h-[47px] w-[368px] pt-[12px] pl-[16.5px] leading-[17px] tracking-[-0.1px]">
        可以看到编号1的顶点，在编号排序为1的情况下，的边线编号是2。
      </Note>

      <div className="absolute top-[1809px] left-[952px] flex h-[60px] w-[216px] items-start rounded-[6px] border border-[#2b2e33] bg-[#191c20]">
        <FileIcon className="mt-[15px] ml-[15px]" />
        <FileIcon className="mt-[13px] ml-[37px]" />
        <FileIcon className="mt-[13px] ml-[36px]" />
      </div>
    </div>
  );
}
